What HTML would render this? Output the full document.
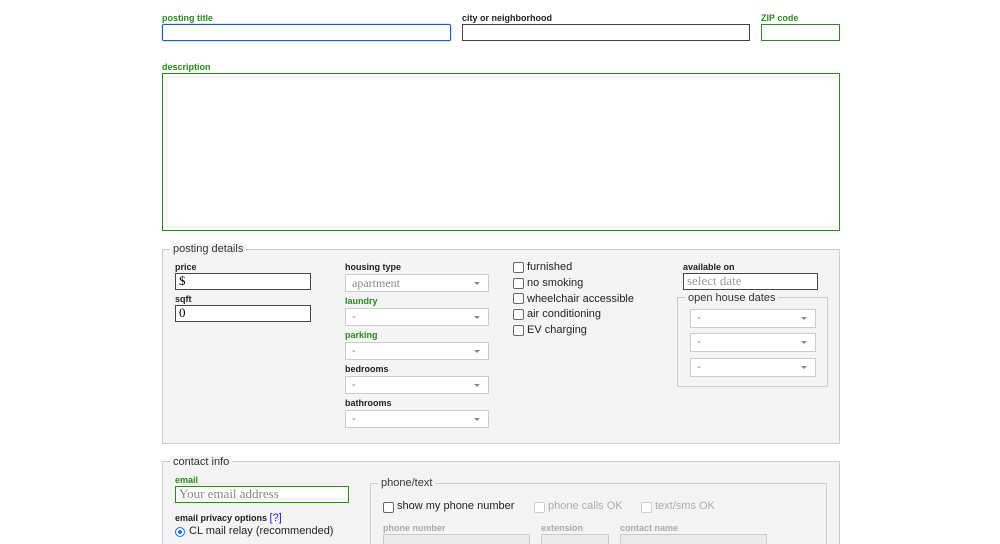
<!DOCTYPE html>
<html><head><style>
html,body{margin:0;width:1000px;height:544px;overflow:hidden}
body{background:#fff;font-family:"Liberation Sans",Arial,sans-serif;position:relative}
.a{position:absolute}
.lb{position:absolute;font-size:9px;font-weight:bold;color:#222}
.g{color:#2a8a1d}
.in{position:absolute;box-sizing:border-box;border:1px solid #444;background:#fff;font-family:"Liberation Serif",serif;font-size:13px;padding-left:3px;line-height:14px}
.sel{position:absolute;box-sizing:border-box;border:1px solid #ccc;background:#fff;font-size:11px;color:#777;padding-left:6px;line-height:16px}
.sel:after{content:"";position:absolute;right:8px;top:7px;border-left:3px solid transparent;border-right:3px solid transparent;border-top:3px solid #888}
.fs{position:absolute;box-sizing:border-box;border:1px solid #ccc}
.lg{position:absolute;font-size:11px;color:#333;padding:0 3px;background:#f4f4f4;line-height:12px}
.cb{position:absolute;width:9px;height:9px;border:1px solid #666;border-radius:2px;background:#fff}
.ct{position:absolute;font-size:11px;color:#222;line-height:12px}
</style></head><body>
<div class="lb g" style="left:162px;top:13px">posting title</div>
<div class="in" style="left:162px;top:24px;width:289px;height:17px;border:1px solid #1a5fb4;box-shadow:0 0 1px #1a5fb4;border-radius:2px"></div>
<div class="lb" style="left:462px;top:13px">city or neighborhood</div>
<div class="in" style="left:462px;top:24px;width:288px;height:17px"></div>
<div class="lb g" style="left:761px;top:13px">ZIP code</div>
<div class="in" style="left:761px;top:24px;width:79px;height:17px;border-color:#2a8a1d"></div>
<div class="lb g" style="left:162px;top:62px">description</div>
<div class="in" style="left:162px;top:73px;width:678px;height:158px;border-color:#2a8a1d"></div>

<div class="fs" style="left:162px;top:249px;width:678px;height:195px;background:#f4f4f4"></div>
<div class="lg" style="left:170px;top:243px">posting details</div>
<div class="lb" style="left:175px;top:262px">price</div>
<div class="in" style="left:175px;top:273px;width:136px;height:17px">$</div>
<div class="lb" style="left:175px;top:294px">sqft</div>
<div class="in" style="left:175px;top:305px;width:136px;height:17px">0</div>
<div class="lb" style="left:345px;top:262px">housing type</div>
<div class="sel" style="left:345px;top:274px;width:144px;height:18px;font-family:'Liberation Serif',serif;font-size:12px;color:#888">apartment</div>
<div class="lb g" style="left:345px;top:296px">laundry</div>
<div class="sel" style="left:345px;top:308px;width:144px;height:18px">-</div>
<div class="lb g" style="left:345px;top:330px">parking</div>
<div class="sel" style="left:345px;top:342px;width:144px;height:18px">-</div>
<div class="lb" style="left:345px;top:364px">bedrooms</div>
<div class="sel" style="left:345px;top:376px;width:144px;height:18px">-</div>
<div class="lb" style="left:345px;top:398px">bathrooms</div>
<div class="sel" style="left:345px;top:410px;width:144px;height:18px">-</div>

<div class="cb" style="left:513px;top:262px"></div><div class="ct" style="left:527px;top:261px">furnished</div>
<div class="cb" style="left:513px;top:278px"></div><div class="ct" style="left:527px;top:277px">no smoking</div>
<div class="cb" style="left:513px;top:293px"></div><div class="ct" style="left:527px;top:293px">wheelchair accessible</div>
<div class="cb" style="left:513px;top:309px"></div><div class="ct" style="left:527px;top:308px">air conditioning</div>
<div class="cb" style="left:513px;top:325px"></div><div class="ct" style="left:527px;top:324px">EV charging</div>

<div class="lb" style="left:683px;top:262px">available on</div>
<div class="in" style="left:683px;top:273px;width:135px;height:17px;color:#999">select date</div>
<div class="fs" style="left:677px;top:297px;width:151px;height:90px"></div>
<div class="lg" style="left:685px;top:292px">open house dates</div>
<div class="sel" style="left:690px;top:309px;width:126px;height:19px">-</div>
<div class="sel" style="left:690px;top:333px;width:126px;height:19px">-</div>
<div class="sel" style="left:690px;top:358px;width:126px;height:19px">-</div>

<div class="fs" style="left:162px;top:461px;width:678px;height:83px;background:#f4f4f4;border-bottom:none"></div>
<div class="lg" style="left:170px;top:456px">contact info</div>
<div class="lb g" style="left:175px;top:475px">email</div>
<div class="in" style="left:175px;top:486px;width:174px;height:17px;border-color:#2a8a1d;color:#888">Your email address</div>
<div class="lb" style="left:175px;top:512px">email privacy options <span style="color:#2222cc;font-weight:normal;font-size:11px">[?]</span></div>
<div class="a" style="left:175px;top:527px;width:8px;height:8px;border-radius:50%;background:#1a73e8;border:1px solid #1a73e8;box-shadow:inset 0 0 0 2px #fff"></div>
<div class="ct" style="left:189px;top:525px">CL mail relay (recommended)</div>
<div class="fs" style="left:370px;top:483px;width:457px;height:61px;border-bottom:none"></div>
<div class="lg" style="left:378px;top:477px">phone/text</div>
<div class="cb" style="left:383px;top:502px"></div><div class="ct" style="left:397px;top:500px">show my phone number</div>
<div class="cb" style="left:534px;top:502px;border-color:#ccc"></div><div class="ct" style="left:548px;top:500px;color:#aaa">phone calls OK</div>
<div class="cb" style="left:641px;top:502px;border-color:#ccc"></div><div class="ct" style="left:655px;top:500px;color:#aaa">text/sms OK</div>
<div class="lb" style="left:383px;top:523px;color:#aaa">phone number</div>
<div class="lb" style="left:541px;top:523px;color:#aaa">extension</div>
<div class="lb" style="left:620px;top:523px;color:#aaa">contact name</div>
<div class="a" style="left:383px;top:534px;width:145px;height:10px;background:#ebebeb;border:1px solid #ccc;border-bottom:none"></div>
<div class="a" style="left:541px;top:534px;width:66px;height:10px;background:#ebebeb;border:1px solid #ccc;border-bottom:none"></div>
<div class="a" style="left:620px;top:534px;width:145px;height:10px;background:#ebebeb;border:1px solid #ccc;border-bottom:none"></div>
</body></html>
